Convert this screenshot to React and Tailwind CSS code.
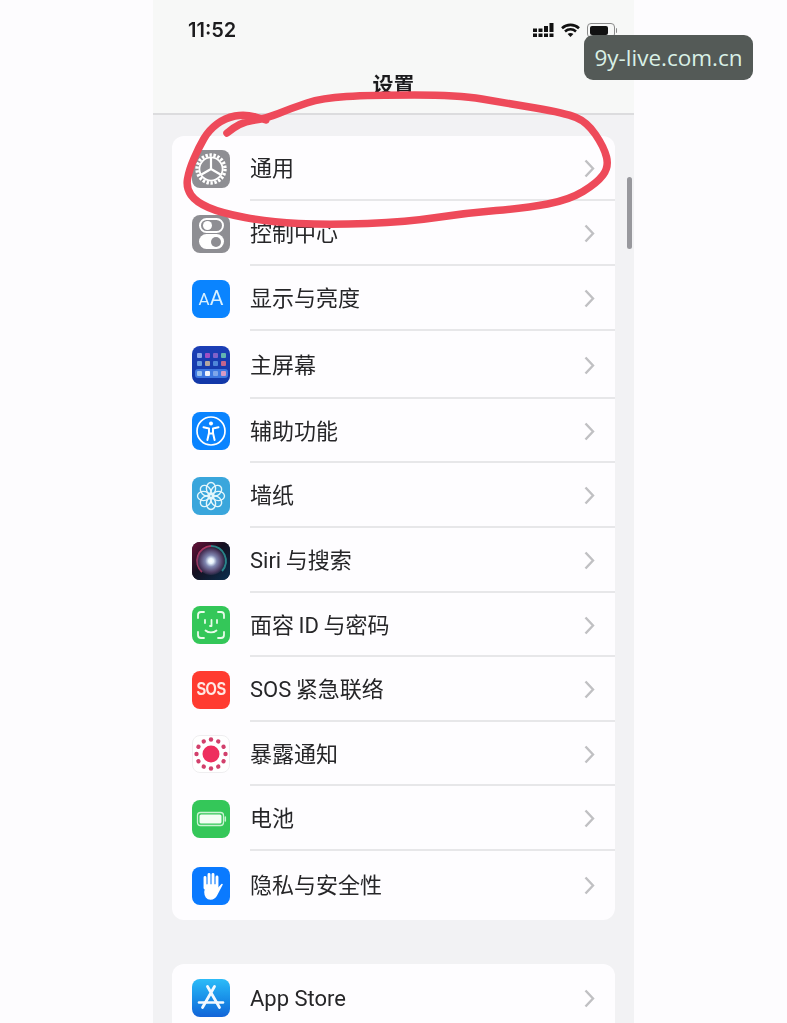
import { useId } from "react";

const cjk = "font-['Roboto','Noto_Sans_CJK_SC',sans-serif]";

function IconBox({ className, children }) {
    return (
        <div className={"flex h-[38px] w-[38px] shrink-0 items-center justify-center overflow-hidden rounded-[8px] " + className}>
            {children}
        </div>
    );
}

function GearIcon() {
    return (
        <IconBox className="bg-[#8e8e93]">
            <svg width="38" height="38" viewBox="0 0 38 38" fill="none" stroke="#fff">
                <circle cx="19" cy="19" r="14" strokeWidth="3.4" strokeDasharray="2.4 1.6" />
                <circle cx="19" cy="19" r="11.6" strokeWidth="1.8" />
                <path d="M19 19V8M19 19 9.500 24.500M19 19 28.500 24.500" strokeWidth="2.2" />
            </svg>
        </IconBox>
    );
}

function ControlIcon() {
    return (
        <IconBox className="bg-[#8e8e93]">
            <div className="flex flex-col gap-[1.5px]">
                <div className="flex h-[15px] w-[25px] items-center justify-start rounded-full border-2 border-white px-[2px]">
                    <div className="h-[9px] w-[9px] rounded-full bg-white" />
                </div>
                <div className="flex h-[15px] w-[25px] items-center justify-end rounded-full bg-white px-[3px]">
                    <div className="h-[10px] w-[10px] rounded-full bg-[#8e8e93]" />
                </div>
            </div>
        </IconBox>
    );
}

function DisplayIcon() {
    return (
        <IconBox className="bg-[#0a84ff]">
            <span className="font-['Roboto',sans-serif] leading-none text-[#d9f1ff]">
                <span className="text-[17px]">A</span>
                <span className="text-[21px]">A</span>
            </span>
        </IconBox>
    );
}

function HomeIcon() {
    const cells = ["#8aa6e8", "#a04fc4", "#8062c8", "#63b5b0", "#6a9ce0", "#b3a59f", "#4f86d8", "#c2658c"];
    const dock = ["#9cc4f0", "#f2f4fa", "#7fa6ea", "#d79ac4"];
    return (
        <IconBox className="bg-gradient-to-b from-[#1c3fb6] to-[#1238a8]">
            <div className="flex flex-col items-center gap-[3px]">
                <div className="grid grid-cols-4 gap-[3px]">
                    {cells.map((c, i) => (
                        <div key={i} className="h-[5px] w-[5px] rounded-[1px]" style={{ background: c }} />
                    ))}
                </div>
                <div className="grid grid-cols-4 gap-[3px] rounded-[3px] bg-[#3f78e0] px-[2px] py-[2px]">
                    {dock.map((c, i) => (
                        <div key={i} className="h-[5px] w-[5px] rounded-[1px]" style={{ background: c }} />
                    ))}
                </div>
            </div>
        </IconBox>
    );
}

function AccessIcon() {
    return (
        <IconBox className="bg-[#0a84ff]">
            <svg width="38" height="38" viewBox="0 0 38 38" fill="none" stroke="#fff">
                <circle cx="19" cy="19" r="14" strokeWidth="1.7" />
                <circle cx="19" cy="11.5" r="2" fill="#fff" stroke="none" />
                <path d="M11.5 15.2 17 16.400V21L15.400 28M26.500 15.200 21 16.400V21L22.600 28M17 21.500H21" strokeWidth="2" strokeLinecap="round" strokeLinejoin="round" />
            </svg>
        </IconBox>
    );
}

function WallpaperIcon() {
    const angles = [0, 45, 90, 135, 180, 225, 270, 315];
    return (
        <IconBox className="bg-[#3aa6dc]">
            <svg width="38" height="38" viewBox="0 0 38 38" fill="none" stroke="#e4f6fb" strokeWidth="1.4">
                {angles.map((a) => (
                    <ellipse key={a} cx="19" cy="11.5" rx="4.6" ry="6" transform={`rotate(${a} 19 19)`} />
                ))}
                <circle cx="19" cy="19" r="3" />
            </svg>
        </IconBox>
    );
}

function SiriIcon() {
    const id = useId();
    return (
        <IconBox className="bg-[#0b0f1e]">
            <svg width="38" height="38" viewBox="0 0 38 38">
                <defs>
                    <linearGradient id={id + "bg"} x1="0" y1="0" x2="1" y2="1">
                        <stop offset="0" stopColor="#6a1038" />
                        <stop offset="0.45" stopColor="#141020" />
                        <stop offset="1" stopColor="#0a3050" />
                    </linearGradient>
                    <radialGradient id={id + "core"}>
                        <stop offset="0" stopColor="#ffffff" />
                        <stop offset="0.18" stopColor="#e6f2fb" />
                        <stop offset="0.42" stopColor="#7f86b0" />
                        <stop offset="0.8" stopColor="#4f3f66" />
                        <stop offset="1" stopColor="#4f3f66" stopOpacity="0.3" />
                    </radialGradient>
                </defs>
                <rect width="38" height="38" fill={`url(#${id}bg)`} />
                <path d="M10 30A15 15 0 0 1 19 4" fill="none" stroke="#c8406f" strokeWidth="2" opacity="0.8" />
                <path d="M19 4A15 15 0 0 1 30 29" fill="none" stroke="#2f9fa0" strokeWidth="2" opacity="0.8" />
                <circle cx="19" cy="19" r="14" fill={`url(#${id}core)`} />
            </svg>
        </IconBox>
    );
}

function FaceIcon() {
    return (
        <IconBox className="bg-[#34c759]">
            <svg width="38" height="38" viewBox="0 0 38 38" fill="none" stroke="#e8fbe9" strokeWidth="1.8" strokeLinecap="round" strokeLinejoin="round">
                <path d="M6 12V9a3 3 0 0 1 3-3h3M26 6h3a3 3 0 0 1 3 3v3M32 26v3a3 3 0 0 1-3 3h-3M12 32H9a3 3 0 0 1-3-3v-3" />
                <path d="M13 14v3M25 14v3M19.500 14v6h-1.500M13.500 24.500c3 2.600 8 2.600 11 0" />
            </svg>
        </IconBox>
    );
}

function SosIcon() {
    return (
        <IconBox className="bg-[#ff3b30]">
            <span className="font-['Liberation_Sans',sans-serif] text-[14.5px] font-bold tracking-[-0.5px] text-[#ffe9e4] [transform:scaleY(1.3)]">SOS</span>
        </IconBox>
    );
}

function ExposureIcon() {
    const big = [0, 30, 60, 90, 120, 150, 180, 210, 240, 270, 300, 330];
    return (
        <IconBox className="border border-[#efeef0] bg-white">
            <svg width="38" height="38" viewBox="0 0 38 38" fill="#ee2e5e" className="shrink-0">
                <circle cx="19" cy="19" r="8.5" />
                {big.map((a) => (
                    <circle key={a} cx="19" cy="4.500" r="2.2" fill="#d2406c" transform={`rotate(${a} 19 19)`} />
                ))}
            </svg>
        </IconBox>
    );
}

function BatteryIcon() {
    return (
        <IconBox className="bg-[#34c759]">
            <svg width="38" height="38" viewBox="0 0 38 38" fill="none">
                <rect x="5.500" y="12.500" width="26" height="13" rx="3" stroke="#c9f3d2" strokeWidth="1.300" />
                <rect x="7.500" y="14.500" width="22" height="9" rx="1.600" fill="#f2fdf3" />
                <path d="M33.300 17v4" stroke="#c9f3d2" strokeWidth="1.500" strokeLinecap="round" />
            </svg>
        </IconBox>
    );
}

function HandIcon() {
    return (
        <IconBox className="bg-[#0a7aff]">
            <svg width="38" height="38" viewBox="0 0 38 38" fill="none" stroke="#fff" strokeWidth="2.900" strokeLinecap="round" strokeLinejoin="round">
                <path d="M13 10.500V21M17 7.500V19M21 7.500V19M25 10V21" />
                <path d="M14.500 18H24V24L30 17.500 24.500 28C23 31 20.500 32 18.500 32C15 32 13 29 13 25Z" fill="#fff" strokeWidth="1.600" />
            </svg>
        </IconBox>
    );
}

function AppStoreIcon() {
    return (
        <IconBox className="bg-gradient-to-b from-[#2dbcf8] to-[#1464d8]">
            <svg width="38" height="38" viewBox="0 0 38 38" fill="none" stroke="#f2f9ff" strokeLinecap="round">
                <path d="M15.500 7.500 27.500 28.500M22.500 7.500 10.500 28.500" strokeWidth="2.800" />
                <path d="M7 23.500H31" strokeWidth="2.600" />
            </svg>
        </IconBox>
    );
}

function Chevron() {
    return (
        <svg width="11" height="19" viewBox="0 0 11 19" fill="none" stroke="#c0c0c3" strokeWidth="2.400" className="shrink-0">
            <path d="M1.500 1.500 9 9.500 1.500 17.500" />
        </svg>
    );
}

function Row({ icon, label, height, last }) {
    return (
        <div className={"flex items-center gap-5 pl-5 " + height}>
            {icon}
            <div className={"flex h-full min-w-0 flex-1 items-center justify-between pr-5 " + (last ? "" : "border-b-2 border-[#e7e7e9] pt-[2px]")}>
                <span className={cjk + " text-[22px] text-[#262628]"}>{label}</span>
                <Chevron />
            </div>
        </div>
    );
}

const rows = [
    { icon: <GearIcon />, label: "通用", height: "h-[65px]" },
    { icon: <ControlIcon />, label: "控制中心", height: "h-[65px]" },
    { icon: <DisplayIcon />, label: "显示与亮度", height: "h-[65px]" },
    { icon: <HomeIcon />, label: "主屏幕", height: "h-[68px]" },
    { icon: <AccessIcon />, label: "辅助功能", height: "h-[64px]" },
    { icon: <WallpaperIcon />, label: "墙纸", height: "h-[65px]" },
    { icon: <SiriIcon />, label: "Siri\u2009与搜索", height: "h-[65px]" },
    { icon: <FaceIcon />, label: "面容\u2009ID\u2009与密码", height: "h-[64px]" },
    { icon: <SosIcon />, label: "SOS\u2009紧急联络", height: "h-[65px]" },
    { icon: <ExposureIcon />, label: "暴露通知", height: "h-[64px]" },
    { icon: <BatteryIcon />, label: "电池", height: "h-[65px]" },
    { icon: <HandIcon />, label: "隐私与安全性", height: "h-[69px]", last: true },
];

function StatusIcons() {
    return (
        <div className="flex items-center gap-[7px]">
            <svg width="21" height="15" viewBox="0 0 21 15" fill="#111">
                <path d="M0 5.500h4v3.500H0zM0 10.500h4V14H0zM5.500 5.500h4v3.500h-4zM5.500 10.500h4V14h-4zM11 3h4v6h-4zM11 10.500h4V14h-4zM16.500 0h4v9h-4zM16.500 10.500h4V14h-4z" />
            </svg>
            <svg width="19" height="15" viewBox="0 0 19 15" fill="none" stroke="#111" strokeWidth="2.600">
                <path d="M1 5.200C5.800.8 13.200.8 18 5.200M4 8.400c3.200-2.800 7.800-2.800 11 0" />
                <path d="M9.500 14 6.600 10.900c1.700-1.300 4.100-1.300 5.800 0Z" fill="#111" stroke="none" />
            </svg>
            <div className="flex items-center gap-[1px]">
                <div className="flex h-[15px] w-[28px] items-center rounded-[4px] border border-[#8a8a8a] p-[2px]">
                    <div className="h-full w-[18px] rounded-[2px] bg-[#111]" />
                </div>
                <div className="h-[5px] w-[1.5px] rounded-r bg-[#8a8a8a]" />
            </div>
        </div>
    );
}

// turn the hand drawn points into a smooth line
const marker = [
    [227, 133], [240, 122], [265, 119], [292, 108], [322, 98], [371, 95], [458, 95], [506, 103],
    [565, 113], [587, 122], [604, 147], [609, 167], [597, 183], [569, 200], [526, 208], [466, 213],
    [407, 222], [328, 225], [269, 222], [221, 213], [196, 202], [186, 188], [189, 170], [199, 147],
    [209, 130], [225, 118], [245, 114], [266, 120],
];

function markerPath(pts) {
    let d = `M${pts[0][0]} ${pts[0][1]}`;
    for (let i = 1; i < pts.length - 1; i++) {
        const mx = (pts[i][0] + pts[i + 1][0]) / 2;
        const my = (pts[i][1] + pts[i + 1][1]) / 2;
        d += ` Q${pts[i][0]} ${pts[i][1]} ${mx} ${my}`;
    }
    const end = pts[pts.length - 1];
    return d + ` L${end[0]} ${end[1]}`;
}

export default function App() {
    return (
        <div className={"relative h-[1023px] w-full overflow-hidden bg-[#fdfcfe] " + cjk}>

            {/* Phone */}
            <div className="mx-auto flex h-full w-[481px] flex-col bg-[#f2f2f4] blur-[0.5px]">

                {/* Header */}
                <div className="flex h-[115px] shrink-0 flex-col border-b-2 border-[#dcdcde] bg-[#f7f8f7]">
                    <div className="flex items-center justify-between pl-[35px] pr-[17px] pt-[16px]">
                        <span className="font-['Inter',sans-serif] text-[20px] font-semibold leading-[28px] text-[#1c1c1e]">11:52</span>
                        <StatusIcons />
                    </div>
                    <div className="mt-[25px] text-center text-[21px] font-semibold leading-[32px] text-[#1c1c1e]">设置</div>
                </div>

                {/* Settings list */}
                <div className="mx-[19px] mt-[21px] shrink-0 overflow-hidden rounded-[12px] bg-[#fefdff]">
                    {rows.map((r) => (
                        <Row key={r.label} {...r} />
                    ))}
                </div>

                <div className="mx-[19px] mt-[44px] flex-1 overflow-hidden rounded-t-[12px] bg-[#fefdff]">
                    <Row icon={<AppStoreIcon />} label="App Store" height="h-[68px]" last />
                </div>
            </div>

            {/* Scroll bar */}
            <div className="absolute left-[627px] top-[177px] h-[72px] w-[5px] rounded-full bg-[#98989d]" />

            {/* Red marker */}
            <svg className="pointer-events-none absolute inset-0" width="787" height="1023" fill="none">
                <path d={markerPath(marker)} stroke="#ee4a5a" strokeWidth="7.5" strokeLinecap="round" strokeLinejoin="round" />
            </svg>

            {/* Watermark */}
            <div className="absolute left-[584px] top-[35px] flex h-[45px] w-[169px] items-center justify-center rounded-[9px] bg-[#545a57] font-['Open_Sans',sans-serif] text-[22.5px] text-[#d9f0e6]">
                9y-live.com.cn
            </div>
        </div>
    );
}
